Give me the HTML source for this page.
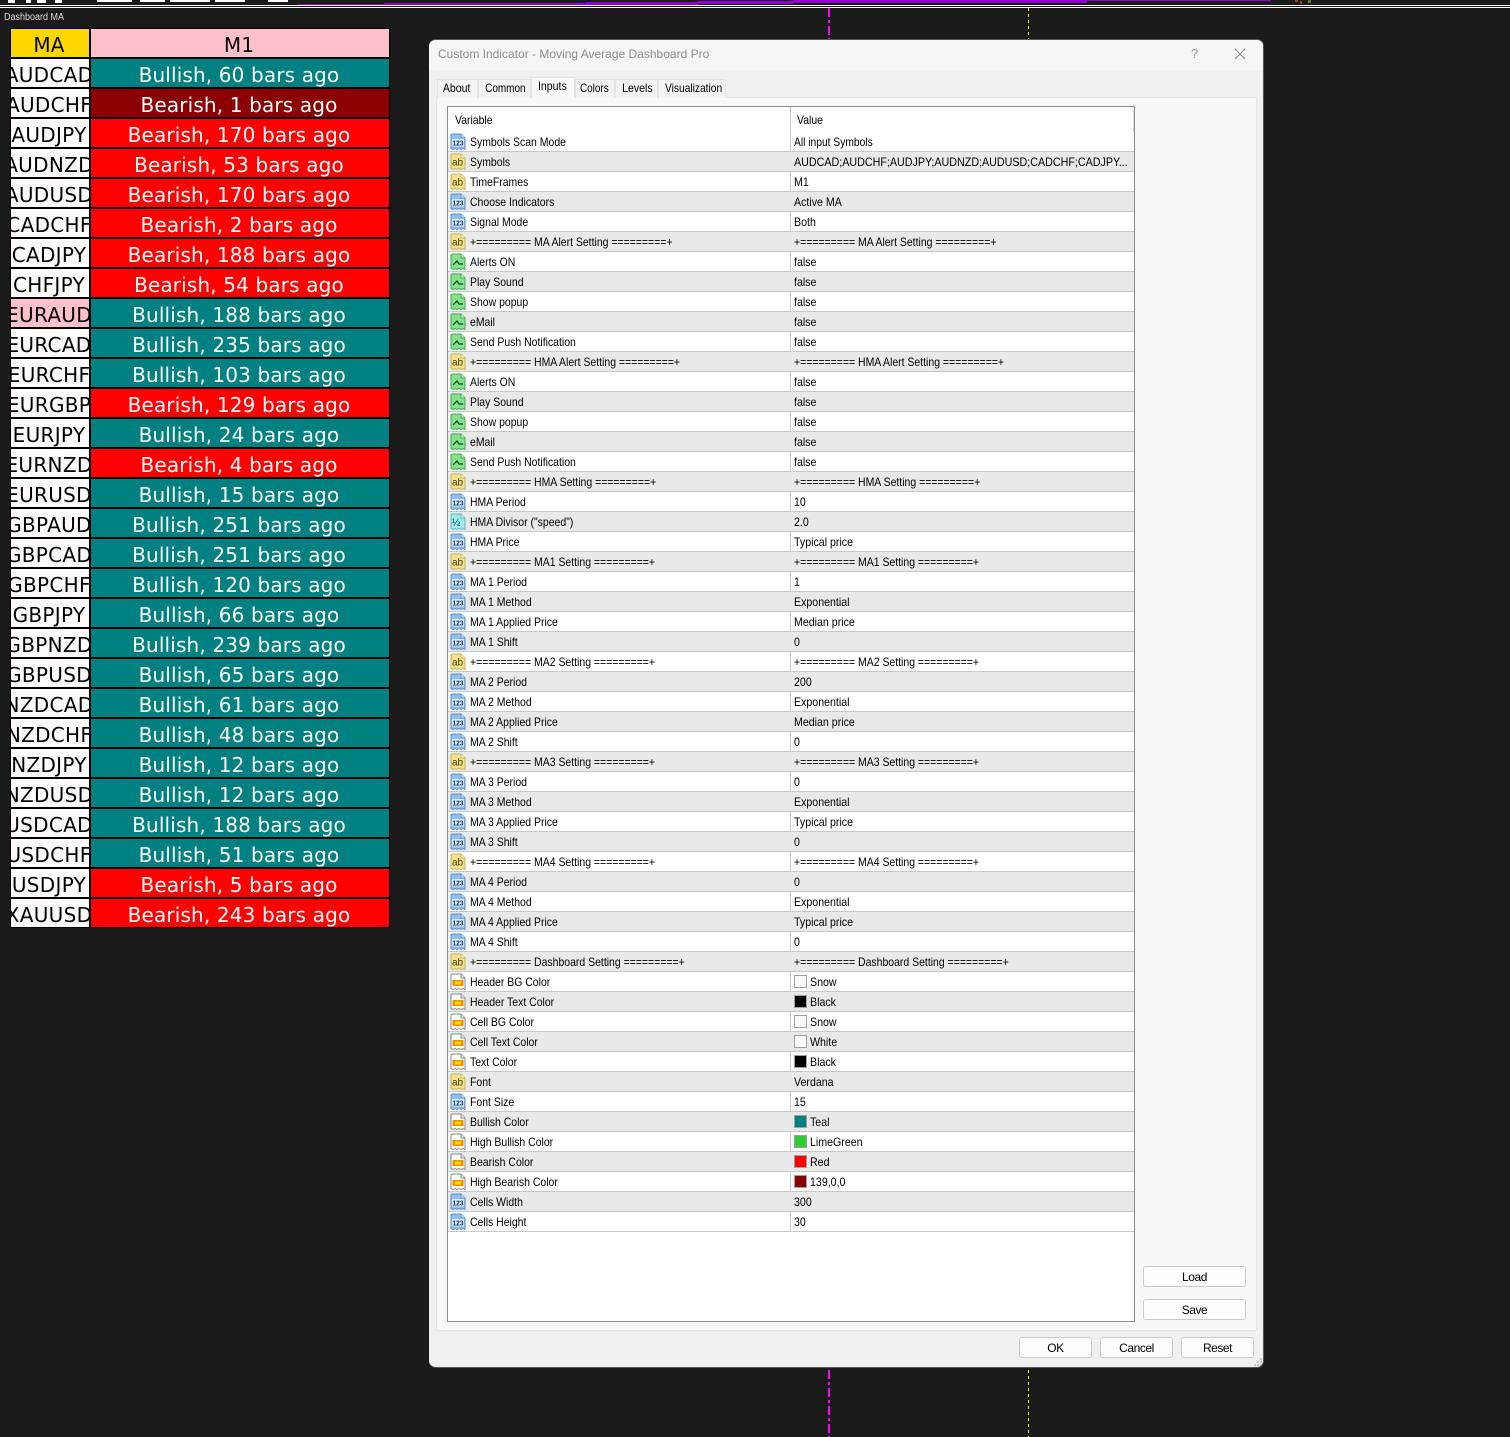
<!DOCTYPE html>
<html><head><meta charset="utf-8"><title>Dashboard</title>
<style>
*{box-sizing:border-box}
html,body{margin:0;padding:0;width:1510px;height:1437px;background:#1a1a1a;overflow:hidden;font-family:"Liberation Sans",sans-serif}
.a{position:absolute}
#d{position:absolute;left:10px;top:28px;width:380px;height:900px;background:#000;display:grid;grid-template-columns:78px 298px;grid-auto-rows:28px;gap:2px;padding:1px;font:20px/32px "DejaVu Sans",sans-serif;letter-spacing:.15px}
#d div{display:flex;justify-content:center;overflow:hidden;white-space:nowrap;color:#fff;padding-right:2px}
#d .n{background:#fffafa;color:#000;letter-spacing:.3px}
#d .u{background:#008080}#d .e{background:#f00}#d .k{background:#8b0000}
#w{position:absolute;left:429px;top:39px;width:835px;height:1329px;background:#f0f0f0;border-radius:7px;border:1px solid #555;border-width:1px 1px 1px 0;overflow:hidden;font-size:12px;color:#000}
#w .ti{position:absolute;left:0;top:0;width:100%;height:30px;background:#f6f6f6}
.tab{position:absolute;top:39px;height:19px;background:#f3f3f3;border:1px solid #e4e4e4;border-bottom:0;text-align:center;line-height:17px;font-size:12px}
.tab span{display:inline-block;transform:scaleX(.88);transform-origin:center}
#p{position:absolute;left:7px;top:57px;width:821px;height:1234px;background:#f8f8f8;border:1px solid #e3e3e3}
#t{position:absolute;left:447px;top:106px;width:688px;height:1216px;background:#fff;border:1px solid #8a8a94;font-size:12px}
#t .h{height:25px;position:relative}
#t .h span{position:absolute;top:6px;line-height:14px;transform:scaleX(.87);transform-origin:left}
#r>div{position:relative;height:20px;border-bottom:1px solid #c8c8c8;white-space:nowrap;line-height:21px}
#r>div:nth-child(even){background:#e9e9e9}
#r svg{position:absolute;left:2px;top:1px;width:16px;height:18px}
#r span{position:absolute;left:22px;top:0;transform:scaleX(.872);transform-origin:left}
#r em{font-style:normal;position:absolute;left:346px;top:0;transform:scaleX(.885);transform-origin:left}
#r em.q{transform:scaleX(.872)}
#r em.c{left:362px}
#r b{position:absolute;left:346px;top:3px;width:13px;height:13px;border:1px solid #a0a0a0}
#dv{position:absolute;left:342px;top:0;width:1px;height:1124px;background:#c8c8c8}
.b{position:absolute;height:21px;background:#fdfdfd;border:1px solid #cacaca;border-radius:3px;text-align:center;line-height:21px;font-size:12px;letter-spacing:-.45px}
</style></head><body>
<svg width="0" height="0" style="position:absolute"><defs>
<symbol id="ya" viewBox="0 0 16 18"><path d="M1 2.500Q1 1 2.500 1H11L15 5V16.500L13 15.500 11 16.500 9 15.500 7 16.500 5 15.500 3 16.500 1 15.500Z" fill="#f2e28c" stroke="#c9b45c"/><path d="M11 1V5H15" fill="#fff8d0" stroke="#c9b45c"/><text x="2" y="12.500" font-family="Liberation Sans" font-size="10" fill="#4a3e08">ab</text></symbol>
<symbol id="nu" viewBox="0 0 16 18"><path d="M1 2.500Q1 1 2.500 1H11L15 5V16.500L13 15.500 11 16.500 9 15.500 7 16.500 5 15.500 3 16.500 1 15.500Z" fill="#92c0ee" stroke="#5a8fd0"/><path d="M11 1V5H15" fill="#d8ebff" stroke="#5a8fd0"/><rect x="2" y="6" width="12" height="7.500" fill="#d9ebfb"/><text x="2.500" y="12.500" font-family="Liberation Sans" font-size="7.500" font-weight="bold" fill="#12386e" textLength="11" lengthAdjust="spacingAndGlyphs">123</text></symbol>
<symbol id="ha" viewBox="0 0 16 18"><path d="M1 2.500Q1 1 2.500 1H11L15 5V16.500L13 15.500 11 16.500 9 15.500 7 16.500 5 15.500 3 16.500 1 15.500Z" fill="#9fecec" stroke="#5fb8c4"/><path d="M11 1V5H15" fill="#dcffff" stroke="#5fb8c4"/><text x="2" y="12.500" font-family="Liberation Sans" font-size="10" fill="#12486e">½</text></symbol>
<symbol id="gr" viewBox="0 0 16 18"><path d="M1 2.500Q1 1 2.500 1H11L15 5V16.500L13 15.500 11 16.500 9 15.500 7 16.500 5 15.500 3 16.500 1 15.500Z" fill="#86e08c" stroke="#3fae50"/><path d="M11 1V5H15" fill="#d8ffd8" stroke="#3fae50"/><path d="M3 12L7 8 9 11H13" fill="none" stroke="#0e4a18" stroke-width="1.200"/></symbol>
<symbol id="co" viewBox="0 0 16 18"><path d="M1 2.500Q1 1 2.500 1H11L15 5V16.500L13 15.500 11 16.500 9 15.500 7 16.500 5 15.500 3 16.500 1 15.500Z" fill="#fff" stroke="#8a8a8a"/><path d="M11 1V5H15" fill="#eee" stroke="#8a8a8a"/><rect x="2.500" y="7" width="11" height="6" fill="#ff8c00"/><rect x="5" y="8.500" width="6" height="3" fill="#ffe600"/></symbol>
</defs></svg>

<div class="a" style="left:0;top:5px;width:1510px;height:1px;background:#fff"></div>
<div class="a" style="left:0;top:7px;width:1510px;height:1px;background:#fff"></div>
<div class="a" style="left:8px;top:0;width:7px;height:3px;background:#fff"></div>
<div class="a" style="left:26px;top:0;width:5px;height:3px;background:#fff"></div>
<div class="a" style="left:37px;top:0;width:9px;height:3px;background:#fff"></div>
<div class="a" style="left:55px;top:0;width:7px;height:3px;background:#fff"></div>
<div class="a" style="left:97px;top:0;width:35px;height:2px;background:#fff"></div>
<div class="a" style="left:140px;top:0;width:25px;height:2px;background:#fff"></div>
<div class="a" style="left:170px;top:0;width:40px;height:2px;background:#fff"></div>
<div class="a" style="left:215px;top:0;width:30px;height:2px;background:#fff"></div>
<div class="a" style="left:268px;top:0;width:20px;height:2px;background:#fff"></div>
<div class="a" style="left:298px;top:4px;width:86px;height:1px;background:#9400d3"></div>
<div class="a" style="left:384px;top:3px;width:202px;height:2px;background:#9400d3"></div>
<div class="a" style="left:586px;top:2px;width:113px;height:3px;background:#9400d3"></div>
<div class="a" style="left:698px;top:1px;width:95px;height:3px;background:#9400d3"></div>
<div class="a" style="left:793px;top:0;width:294px;height:3px;background:#9400d3"></div>
<div class="a" style="left:1087px;top:0;width:184px;height:1px;background:#9400d3"></div>
<div class="a" style="left:1295px;top:0;width:3px;height:2px;background:#a04a10"></div>
<div class="a" style="left:1300px;top:1px;width:2px;height:3px;background:#a04a10"></div>
<div class="a" style="left:1308px;top:0;width:3px;height:3px;background:#5a7a30"></div>
<div class="a" style="left:828px;top:8px;width:2px;height:31px;background:repeating-linear-gradient(#f0f 0 9px,transparent 9px 12px,#f0f 12px 15px,transparent 15px 18px)"></div>
<div class="a" style="left:828px;top:1370px;width:2px;height:67px;background:repeating-linear-gradient(#f0f 0 9px,transparent 9px 12px,#f0f 12px 15px,transparent 15px 18px)"></div>
<div class="a" style="left:1028px;top:8px;width:1px;height:31px;background:repeating-linear-gradient(#ff0 0 3px,transparent 3px 6px)"></div>
<div class="a" style="left:1028px;top:1370px;width:1px;height:67px;background:repeating-linear-gradient(#ff0 0 3px,transparent 3px 6px)"></div>
<div class="a" style="left:4px;top:11px;font-size:10px;line-height:13px;color:#ddd;transform:scaleX(.9);transform-origin:left;white-space:nowrap">Dashboard MA</div>

<div id="d">
<div style="background:#ffd700;color:#000;">MA</div><div style="background:#ffc0cb;color:#000;">M1</div>
<div class="n">AUDCAD</div><div class="u">Bullish, 60 bars ago</div>
<div class="n">AUDCHF</div><div class="k">Bearish, 1 bars ago</div>
<div class="n">AUDJPY</div><div class="e">Bearish, 170 bars ago</div>
<div class="n">AUDNZD</div><div class="e">Bearish, 53 bars ago</div>
<div class="n">AUDUSD</div><div class="e">Bearish, 170 bars ago</div>
<div class="n">CADCHF</div><div class="e">Bearish, 2 bars ago</div>
<div class="n">CADJPY</div><div class="e">Bearish, 188 bars ago</div>
<div class="n">CHFJPY</div><div class="e">Bearish, 54 bars ago</div>
<div class="n" style="background:#ffc0cb">EURAUD</div><div class="u">Bullish, 188 bars ago</div>
<div class="n">EURCAD</div><div class="u">Bullish, 235 bars ago</div>
<div class="n">EURCHF</div><div class="u">Bullish, 103 bars ago</div>
<div class="n">EURGBP</div><div class="e">Bearish, 129 bars ago</div>
<div class="n">EURJPY</div><div class="u">Bullish, 24 bars ago</div>
<div class="n">EURNZD</div><div class="e">Bearish, 4 bars ago</div>
<div class="n">EURUSD</div><div class="u">Bullish, 15 bars ago</div>
<div class="n">GBPAUD</div><div class="u">Bullish, 251 bars ago</div>
<div class="n">GBPCAD</div><div class="u">Bullish, 251 bars ago</div>
<div class="n">GBPCHF</div><div class="u">Bullish, 120 bars ago</div>
<div class="n">GBPJPY</div><div class="u">Bullish, 66 bars ago</div>
<div class="n">GBPNZD</div><div class="u">Bullish, 239 bars ago</div>
<div class="n">GBPUSD</div><div class="u">Bullish, 65 bars ago</div>
<div class="n">NZDCAD</div><div class="u">Bullish, 61 bars ago</div>
<div class="n">NZDCHF</div><div class="u">Bullish, 48 bars ago</div>
<div class="n">NZDJPY</div><div class="u">Bullish, 12 bars ago</div>
<div class="n">NZDUSD</div><div class="u">Bullish, 12 bars ago</div>
<div class="n">USDCAD</div><div class="u">Bullish, 188 bars ago</div>
<div class="n">USDCHF</div><div class="u">Bullish, 51 bars ago</div>
<div class="n">USDJPY</div><div class="e">Bearish, 5 bars ago</div>
<div class="n">XAUUSD</div><div class="e">Bearish, 243 bars ago</div>
</div>

<div id="w">
<div class="ti"></div>
<div class="a" style="left:9px;top:7px;line-height:15px;color:#8d8d8d;font-size:12px;">Custom Indicator - Moving Average Dashboard Pro</div>
<div class="a" style="left:762px;top:6px;line-height:16px;color:#9a9a9a;font-size:13px;">?</div>
<svg class="a" style="left:804px;top:7px" width="14" height="14"><path d="M2 2L12 12M12 2L2 12" stroke="#8a8a8a" fill="none" stroke-width="1"/></svg>
<div id="p"></div>
<div class="tab" style="left:8px;width:41px"><span style="transform:translateX(-1px) scaleX(.88)">About</span></div>
<div class="tab" style="left:49px;width:53px"><span style="transform:translateX(1px) scaleX(.83)">Common</span></div>
<div class="tab" style="left:102px;width:44px;top:37px;height:21px;background:#f8f8f8;line-height:17px;z-index:2"><span style="transform:translateX(-1px) scaleX(.88)">Inputs</span></div>
<div class="tab" style="left:146px;width:40px"><span style="transform:translateX(-1px) scaleX(.83)">Colors</span></div>
<div class="tab" style="left:186px;width:43px"><span style="transform:translateX(1px) scaleX(.88)">Levels</span></div>
<div class="tab" style="left:229px;width:68px"><span style="transform:translateX(1px) scaleX(.85)">Visualization</span></div>
<div class="b" style="left:714px;top:1226px;width:103px">Load</div>
<div class="b" style="left:714px;top:1259px;width:103px">Save</div>
<div class="b" style="left:590px;top:1297px;width:73px">OK</div>
<div class="b" style="left:671px;top:1297px;width:73px">Cancel</div>
<div class="b" style="left:752px;top:1297px;width:73px">Reset</div>
<svg class="a" style="left:824px;top:1317px" width="9" height="9"><path d="M7 1h2v2H7zM4 4h2v2H4zM7 4h2v2H7zM1 7h2v2H1zM4 7h2v2H4zM7 7h2v2H7z" fill="#c4c4c4"/></svg>
</div>

<div id="t">
<div class="h"><span style="left:7px">Variable</span><span style="left:349px">Value</span><div class="a" style="left:685px;top:1px;width:1px;height:24px;background:#ddd"></div></div>
<div id="dv"></div>
<div id="r">
<div><svg><use href="#nu"/></svg><span>Symbols Scan Mode</span><em class="q" style="transform:scaleX(.855)">All input Symbols</em></div>
<div><svg><use href="#ya"/></svg><span>Symbols</span><em style="transform:scaleX(.893)">AUDCAD;AUDCHF;AUDJPY;AUDNZD;AUDUSD;CADCHF;CADJPY...</em></div>
<div><svg><use href="#ya"/></svg><span>TimeFrames</span><em>M1</em></div>
<div><svg><use href="#nu"/></svg><span>Choose Indicators</span><em>Active MA</em></div>
<div><svg><use href="#nu"/></svg><span>Signal Mode</span><em>Both</em></div>
<div><svg><use href="#ya"/></svg><span>+========= MA Alert Setting =========+</span><em class="q">+========= MA Alert Setting =========+</em></div>
<div><svg><use href="#gr"/></svg><span>Alerts ON</span><em>false</em></div>
<div><svg><use href="#gr"/></svg><span>Play Sound</span><em>false</em></div>
<div><svg><use href="#gr"/></svg><span>Show popup</span><em>false</em></div>
<div><svg><use href="#gr"/></svg><span>eMail</span><em>false</em></div>
<div><svg><use href="#gr"/></svg><span>Send Push Notification</span><em>false</em></div>
<div><svg><use href="#ya"/></svg><span>+========= HMA Alert Setting =========+</span><em class="q">+========= HMA Alert Setting =========+</em></div>
<div><svg><use href="#gr"/></svg><span>Alerts ON</span><em>false</em></div>
<div><svg><use href="#gr"/></svg><span>Play Sound</span><em>false</em></div>
<div><svg><use href="#gr"/></svg><span>Show popup</span><em>false</em></div>
<div><svg><use href="#gr"/></svg><span>eMail</span><em>false</em></div>
<div><svg><use href="#gr"/></svg><span>Send Push Notification</span><em>false</em></div>
<div><svg><use href="#ya"/></svg><span>+========= HMA Setting =========+</span><em class="q">+========= HMA Setting =========+</em></div>
<div><svg><use href="#nu"/></svg><span>HMA Period</span><em>10</em></div>
<div><svg><use href="#ha"/></svg><span>HMA Divisor ("speed")</span><em>2.0</em></div>
<div><svg><use href="#nu"/></svg><span>HMA Price</span><em>Typical price</em></div>
<div><svg><use href="#ya"/></svg><span>+========= MA1 Setting =========+</span><em class="q">+========= MA1 Setting =========+</em></div>
<div><svg><use href="#nu"/></svg><span>MA 1 Period</span><em>1</em></div>
<div><svg><use href="#nu"/></svg><span>MA 1 Method</span><em>Exponential</em></div>
<div><svg><use href="#nu"/></svg><span>MA 1 Applied Price</span><em>Median price</em></div>
<div><svg><use href="#nu"/></svg><span>MA 1 Shift</span><em>0</em></div>
<div><svg><use href="#ya"/></svg><span>+========= MA2 Setting =========+</span><em class="q">+========= MA2 Setting =========+</em></div>
<div><svg><use href="#nu"/></svg><span>MA 2 Period</span><em>200</em></div>
<div><svg><use href="#nu"/></svg><span>MA 2 Method</span><em>Exponential</em></div>
<div><svg><use href="#nu"/></svg><span>MA 2 Applied Price</span><em>Median price</em></div>
<div><svg><use href="#nu"/></svg><span>MA 2 Shift</span><em>0</em></div>
<div><svg><use href="#ya"/></svg><span>+========= MA3 Setting =========+</span><em class="q">+========= MA3 Setting =========+</em></div>
<div><svg><use href="#nu"/></svg><span>MA 3 Period</span><em>0</em></div>
<div><svg><use href="#nu"/></svg><span>MA 3 Method</span><em>Exponential</em></div>
<div><svg><use href="#nu"/></svg><span>MA 3 Applied Price</span><em>Typical price</em></div>
<div><svg><use href="#nu"/></svg><span>MA 3 Shift</span><em>0</em></div>
<div><svg><use href="#ya"/></svg><span>+========= MA4 Setting =========+</span><em class="q">+========= MA4 Setting =========+</em></div>
<div><svg><use href="#nu"/></svg><span>MA 4 Period</span><em>0</em></div>
<div><svg><use href="#nu"/></svg><span>MA 4 Method</span><em>Exponential</em></div>
<div><svg><use href="#nu"/></svg><span>MA 4 Applied Price</span><em>Typical price</em></div>
<div><svg><use href="#nu"/></svg><span>MA 4 Shift</span><em>0</em></div>
<div><svg><use href="#ya"/></svg><span>+========= Dashboard Setting =========+</span><em class="q">+========= Dashboard Setting =========+</em></div>
<div><svg><use href="#co"/></svg><span>Header BG Color</span><b style="background:#fffafa"></b><em class="c">Snow</em></div>
<div><svg><use href="#co"/></svg><span>Header Text Color</span><b style="background:#000"></b><em class="c">Black</em></div>
<div><svg><use href="#co"/></svg><span>Cell BG Color</span><b style="background:#fffafa"></b><em class="c">Snow</em></div>
<div><svg><use href="#co"/></svg><span>Cell Text Color</span><b style="background:#fff"></b><em class="c">White</em></div>
<div><svg><use href="#co"/></svg><span>Text Color</span><b style="background:#000"></b><em class="c">Black</em></div>
<div><svg><use href="#ya"/></svg><span>Font</span><em>Verdana</em></div>
<div><svg><use href="#nu"/></svg><span>Font Size</span><em>15</em></div>
<div><svg><use href="#co"/></svg><span>Bullish Color</span><b style="background:#008080"></b><em class="c">Teal</em></div>
<div><svg><use href="#co"/></svg><span>High Bullish Color</span><b style="background:#32cd32"></b><em class="c">LimeGreen</em></div>
<div><svg><use href="#co"/></svg><span>Bearish Color</span><b style="background:#f00"></b><em class="c">Red</em></div>
<div><svg><use href="#co"/></svg><span>High Bearish Color</span><b style="background:#8b0000"></b><em class="c">139,0,0</em></div>
<div><svg><use href="#nu"/></svg><span>Cells Width</span><em>300</em></div>
<div><svg><use href="#nu"/></svg><span>Cells Height</span><em>30</em></div>
</div>
</div>
</body></html>
